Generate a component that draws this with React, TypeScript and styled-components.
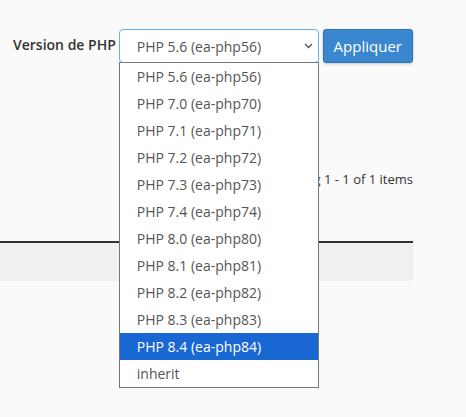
import React from 'react';
import styled, { createGlobalStyle } from 'styled-components';

const GlobalStyle = createGlobalStyle`
  html, body {
    margin: 0;
    padding: 0;
    background: #fafafa;
    font-family: "Open Sans", "Liberation Sans", sans-serif;
    color: #333;
  }
`;

const Page = styled.div`
  width: 413px;
  min-height: 417px;
  padding-top: 29px;
  box-sizing: border-box;
`;

const FormRow = styled.div`
  display: flex;
  align-items: flex-start;
  padding-left: 13px;
`;

const Label = styled.label`
  flex-shrink: 0;
  white-space: nowrap;
  font-size: 14px;
  font-weight: 600;
  color: #333;
  line-height: 33px;
  margin-right: 3px;
  margin-top: -1px;
`;

const SelectWrap = styled.div`
  position: relative;
  flex-shrink: 0;
  width: 200px;
  z-index: 5;
`;

const SelectBox = styled.div`
  box-sizing: border-box;
  height: 34px;
  border: 1px solid #66afe9;
  border-radius: 4px;
  background: #fff;
  display: flex;
  align-items: center;
  justify-content: space-between;
  padding: 0 5px 0 17px;
  font-size: 14px;
  color: #555;
`;

const Menu = styled.ul`
  position: absolute;
  top: 33px;
  left: 0;
  width: 200px;
  box-sizing: border-box;
  margin: 0;
  padding: 0;
  list-style: none;
  background: #fff;
  border: 1px solid #767676;
  z-index: 10;
`;

const Option = styled.li<{ $active?: boolean }>`
  height: 27px;
  line-height: 27px;
  padding-left: 17px;
  font-size: 14px;
  color: ${p => (p.$active ? '#fff' : '#555')};
  background: ${p => (p.$active ? '#1967d2' : 'transparent')};
`;

const ApplyButton = styled.button`
  flex-shrink: 0;
  box-sizing: border-box;
  width: 90px;
  height: 34px;
  margin-left: 4px;
  padding: 0;
  background: #3b87cf;
  border: 1px solid #2f72b3;
  border-radius: 3px;
  color: #fff;
  font-family: inherit;
  font-size: 15px;
  box-shadow: 0 1px 3px rgba(0, 0, 0, 0.2);
`;

const Status = styled.div`
  text-align: right;
  font-size: 13px;
  color: #333;
  margin-top: 107px;
  line-height: 18px;
`;

const Table = styled.div`
  margin-top: 53px;
  border-top: 2px solid #333;
  height: 38px;
  background: #f0f0f0;
`;

const versions = ['56', '70', '71', '72', '73', '74', '80', '81', '82', '83', '84'];

const Chevron = () => (
  <svg width="9" height="6" viewBox="0 0 9 6">
    <path d="M1 1l3.5 3.5L8 1" fill="none" stroke="#555" strokeWidth="1.4" />
  </svg>
);

export default function App() {
  return (
    <Page>
      <GlobalStyle />
      <FormRow>
        <Label>Version de PHP</Label>
        <SelectWrap>
          <SelectBox>
            <span>PHP 5.6 (ea-php56)</span>
            <Chevron />
          </SelectBox>
          <Menu>
            {versions.map(v => (
              <Option key={v} $active={v === '84'}>
                PHP {v[0]}.{v[1]} (ea-php{v})
              </Option>
            ))}
            <Option>inherit</Option>
          </Menu>
        </SelectWrap>
        <ApplyButton>Appliquer</ApplyButton>
      </FormRow>
      <Status>Displaying 1 - 1 of 1 items</Status>
      <Table />
    </Page>
  );
}
